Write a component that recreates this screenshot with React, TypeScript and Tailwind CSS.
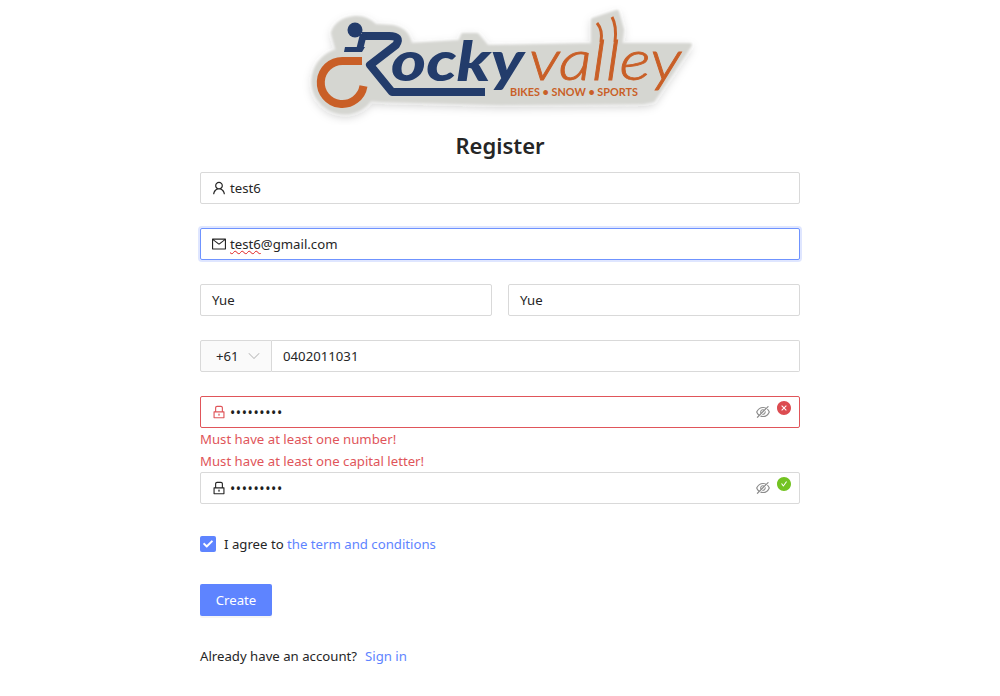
import type { ReactNode } from 'react'
import {
  AiOutlineUser,
  AiOutlineMail,
  AiOutlineLock,
  AiOutlineEyeInvisible,
  AiFillCloseCircle,
  AiFillCheckCircle,
} from 'react-icons/ai'
import { FaCheck } from 'react-icons/fa'
import { LuChevronDown } from 'react-icons/lu'

function LogoShapes() {
  return (
    <>
      <path d="M62 61H42.5A21.5 21.5 0 1 0 63.5 86" fill="none" stroke="#c95f27" strokeWidth="8" />
      <path d="M62 36H89Q102 36 96 45L70 65L92 92H185" fill="none" stroke="#233c6b" strokeWidth="8" strokeLinejoin="round" />
      <path d="M45 47H65L62 52H44Z M60 34H67L63 50H56Z" fill="#233c6b" />
      <circle cx="55" cy="30" r="7.5" fill="#233c6b" />
      <path d="M297 23Q303 30 301 42 M312 17Q317 26 315 42" fill="none" stroke="#c95f27" strokeWidth="3" />
    </>
  )
}

function Logo() {
  return (
    <svg viewBox="0 0 400 125" className="block w-[400px] h-[125px]">
      <defs>
        <filter id="logo-soft" x="-5%" y="-10%" width="110%" height="125%">
          <feGaussianBlur in="SourceGraphic" stdDeviation="1" result="soft" />
          <feDropShadow in="soft" dx="0" dy="3" stdDeviation="4" floodColor="#000" floodOpacity="0.18" />
        </filter>
      </defs>
      <g filter="url(#logo-soft)">
        <path
          d="M38 51L33 33Q37 20 55 18Q66 17 75 26L92 27Q108 30 110 45L160 42L163 35L177 35L187 47L293 45L293 20L317 12L322 30L320 45L390 45L353 100L343 102L200 103L83 100L70 99A31 31 0 1 1 38 51Z"
          fill="#d5d6d1"
          stroke="#d5d6d1"
          strokeWidth="4"
          strokeLinejoin="round"
        />
      </g>
      <LogoShapes />
      <text x="91" y="81" textLength="133" lengthAdjust="spacingAndGlyphs" fontFamily="Lato, sans-serif" fontWeight="900" fontStyle="italic" fontSize="56" fill="#233c6b">
        ocky
      </text>
      <text x="229" y="80" textLength="152" lengthAdjust="spacingAndGlyphs" fontFamily="Lato, sans-serif" fontWeight="300" fontStyle="italic" fontSize="55" fill="#c95f27" stroke="#c95f27" strokeWidth="0.8">
        valley
      </text>
      <text x="210" y="96" textLength="128" lengthAdjust="spacingAndGlyphs" fontFamily="Lato, sans-serif" fontWeight="700" fontSize="10.5" fill="#c95f27">
        BIKES • SNOW • SPORTS
      </text>
    </svg>
  )
}

function Field({
  children,
  className = '',
  border = 'border-[#d9d9d9]',
}: {
  children: ReactNode
  className?: string
  border?: string
}) {
  return (
    <div className={`flex items-center h-8 pl-[11px] pr-[7px] bg-white border rounded-[2px] ${border} ${className}`}>
      {children}
    </div>
  )
}

function Dots() {
  return <span className="flex-1 text-[14px] tracking-[0.6px] text-[#1f1f1f]">•••••••••</span>
}

export default function App() {
  return (
    <div className="min-h-[696px] bg-white font-['Noto_Sans','Open_Sans',sans-serif] text-[13.2px] text-[#262626]">
      <div className="flex justify-center h-[130px]">
        <Logo />
      </div>
      <div className="w-[600px] mx-auto">
        <h1 className="h-8 mb-[10px] text-center text-[22px] leading-[30px] font-semibold">Register</h1>

        <Field className="mb-6">
          <AiOutlineUser className="text-[16px] -ml-px mr-[3px]" />
          <span className="pt-px">test6</span>
        </Field>

        <Field className="mb-6 shadow-[0_0_0_2px_rgba(94,132,255,0.2)]" border="border-[#6f93ff]">
          <AiOutlineMail className="text-[16px] -ml-px mr-[3px]" />
          <span className="pt-px">
            <span className="underline decoration-wavy decoration-[#e02020] decoration-1">test6</span>@gmail.com
          </span>
        </Field>

        <div className="grid grid-cols-2 gap-4 mb-6">
          <Field>
            <span className="pt-px">Yue</span>
          </Field>
          <Field>
            <span className="pt-px">Yue</span>
          </Field>
        </div>

        <div className="flex mb-6">
          <div className="flex items-center w-[72px] h-8 pl-[15px] bg-[#fafafa] border border-[#d9d9d9] rounded-l-[2px]">
            <span className="pt-px">+61</span>
            <LuChevronDown strokeWidth={1.25} className="ml-[5px] text-[20px] text-[#bfbfbf]" />
          </div>
          <Field className="flex-1 border-l-0 rounded-l-none">
            <span className="pt-px">0402011031</span>
          </Field>
        </div>

        <Field border="border-[#e0555a]">
          <AiOutlineLock className="text-[16px] -ml-px mr-[3px] text-[#e0555a]" />
          <Dots />
          <AiOutlineEyeInvisible className="text-[16px] text-[#8c8c8c]" />
          <AiFillCloseCircle className="text-[16px] ml-[5px] self-start mt-[3px] text-[#dc4c51]" />
        </Field>
        <p className="h-[22px] leading-[22px] text-[#e0555a]">Must have at least one number!</p>
        <p className="h-[22px] leading-[22px] text-[#e0555a]">Must have at least one capital letter!</p>

        <Field className="mb-6">
          <AiOutlineLock className="text-[16px] -ml-px mr-[3px]" />
          <Dots />
          <AiOutlineEyeInvisible className="text-[16px] text-[#8c8c8c]" />
          <AiFillCheckCircle className="text-[16px] ml-[5px] self-start mt-[3px] text-[#73c322]" />
        </Field>

        <div className="flex items-center h-8 mb-6">
          <span className="flex items-center justify-center w-4 h-4 bg-[#5e84ff] rounded-[2px] mr-2">
            <FaCheck className="text-[10px] text-white" />
          </span>
          <span className="pt-px">
            I agree to <a className="text-[#5e84ff]">the term and conditions</a>
          </span>
        </div>

        <button className="block w-[72px] h-8 mb-6 pt-px bg-[#5e84ff] text-white rounded-[2px] shadow-[0_2px_0_rgba(0,0,0,0.04)]">
          Create
        </button>

        <p className="h-8 leading-8">
          Already have an account?
          <a className="ml-2 text-[#5e84ff]">Sign in</a>
        </p>
      </div>
    </div>
  )
}
